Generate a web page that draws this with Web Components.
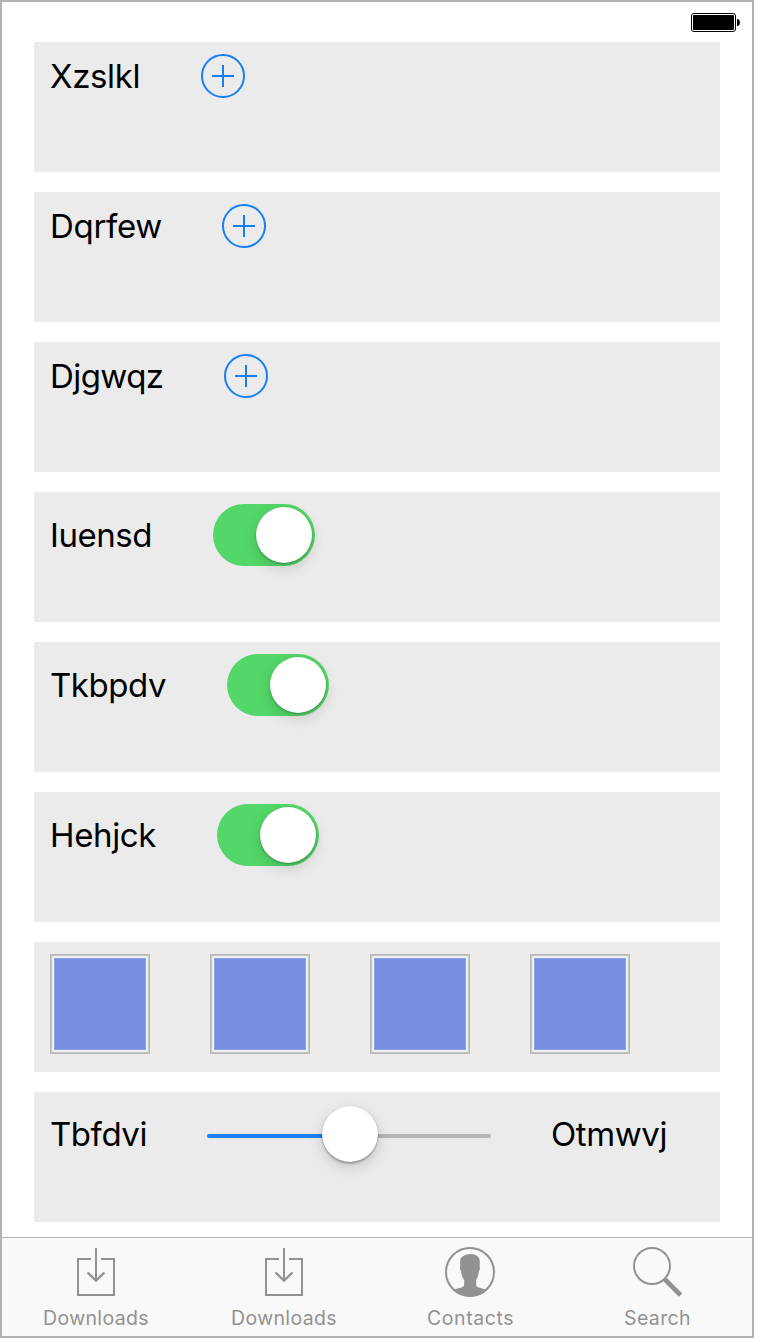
<!DOCTYPE html>
<html lang="en">
<head>
<meta charset="utf-8">
<title>Controls</title>
<style>
html, body { margin: 0; background: #fff; }
body { font-family: Inter, "Liberation Sans", sans-serif; color: #000; }
</style>
</head>
<body>
<phone-screen>
  <battery-level slot="status"></battery-level>
  <control-card><fit-text width="91" text="90">Xzslkl</fit-text><add-button></add-button></control-card>
  <control-card><fit-text width="112" text="112">Dqrfew</fit-text><add-button></add-button></control-card>
  <control-card><fit-text width="114" text="113.500">Djgwqz</fit-text><add-button></add-button></control-card>
  <control-card><fit-text width="103" text="102">Iuensd</fit-text><toggle-switch></toggle-switch></control-card>
  <control-card><fit-text width="117" text="116">Tkbpdv</fit-text><toggle-switch></toggle-switch></control-card>
  <control-card><fit-text width="107" text="106">Hehjck</fit-text><toggle-switch></toggle-switch></control-card>
  <control-card><color-tile></color-tile><color-tile></color-tile><color-tile></color-tile><color-tile></color-tile></control-card>
  <control-card><fit-text width="97" text="97">Tbfdvi</fit-text><value-slider></value-slider><fit-text width="116" text="116">Otmwvj</fit-text></control-card>
  <tab-bar slot="tabs">
    <tab-item icon="download"><fit-text width="106" text="106">Downloads</fit-text></tab-item>
    <tab-item icon="download"><fit-text width="106" text="106">Downloads</fit-text></tab-item>
    <tab-item icon="contact"><fit-text width="86" text="87">Contacts</fit-text></tab-item>
    <tab-item icon="search"><fit-text width="66" text="67">Search</fit-text></tab-item>
  </tab-bar>
</phone-screen>
<script>
function define(name, html, setup) {
  const template = document.createElement('template');
  template.innerHTML = html;
  customElements.define(name, class extends HTMLElement {
    constructor() {
      super();
      this.attachShadow({ mode: 'open' }).append(template.content.cloneNode(true));
    }
    connectedCallback() { if (setup) setup(this); }
  });
}

define('phone-screen', `<style>
:host { display: flex; flex-direction: column; box-sizing: border-box; width: 754px; height: 1338px; border: 2px solid #b2b2b2; background: #fff; }
header { display: flex; justify-content: flex-end; height: 29px; padding: 11px 12px 0 0; }
main { flex: 1; display: flex; flex-direction: column; gap: 20px; padding: 0 32px; }
</style><header><slot name="status"></slot></header><main><slot></slot></main><slot name="tabs"></slot>`);

define('battery-level', `<style>
:host { display: block; width: 49px; height: 19px; }
svg { display: block; }
</style><svg width="49" height="19" viewBox="0 0 49 19">
<rect x=".5" y=".5" width="44" height="18" rx="2.5" fill="#fff" stroke="#000"/>
<rect x="2" y="2" width="41" height="15" rx="1"/>
<path d="M46 6h1q2 1 2 3.500t-2 3.500h-1z"/></svg>`);

define('control-card', `<style>
:host { display: flex; align-items: flex-start; box-sizing: border-box; height: 130px; flex: none; padding: 12px 16px; background: #ebebeb; font-size: 33px; }
div { display: flex; align-items: center; gap: 60px; }
</style><div><slot></slot></div>`);

define('add-button', `<style>
:host { display: block; width: 44px; height: 44px; }
svg { display: block; }
</style><svg width="44" height="44" fill="none" stroke="#147efb" stroke-width="2"><circle cx="22" cy="22" r="21"/><path d="M11 22h22M22 11v22"/></svg>`);

define('toggle-switch', `<style>
:host { display: flex; justify-content: flex-end; box-sizing: border-box; width: 102px; height: 62px; padding: 3px; border-radius: 31px; background: #53d769; }
i { width: 56px; height: 56px; border-radius: 50%; background: #fff; box-shadow: 0 1px 2px rgba(0,0,0,.28), 0 5px 14px rgba(0,0,0,.16); }
</style><i></i>`);

define('color-tile', `<style>
:host { display: block; box-sizing: border-box; width: 100px; height: 100px; border: 1px solid #b7b7b7; background: #eceefa; padding: 3px; box-shadow: inset 0 0 0 1px #c4c4c4, inset 0 0 0 2px #ededed; }
i { display: block; box-sizing: border-box; height: 92px; background: #768ee2; border: 1px solid #8ca0e6; }
</style><i></i>`);

define('value-slider', `<style>
:host { display: grid; align-items: center; justify-items: center; width: 284px; height: 60px; }
b, i { grid-area: 1 / 1; }
b { width: 284px; height: 4px; margin-top: 4px; border-radius: 2px; background: linear-gradient(90deg, #147efb 50%, #b5b5b5 50%); }
i { width: 56px; height: 56px; margin-left: 2px; border-radius: 50%; background: #fff; box-shadow: 0 0 1px rgba(0,0,0,.25), 0 2px 2px rgba(0,0,0,.25), 0 5px 14px rgba(0,0,0,.17); }
</style><b></b><i></i>`);

define('tab-bar', `<style>
:host { display: grid; grid-template-columns: 188px 188px 184px 190px; box-sizing: border-box; height: 99px; border-top: 1px solid #b2b2b2; background: #f9f9f9; color: #929292; font-size: 19.5px; }
</style><slot></slot>`);

const icons = {
  download: '<g fill="none" stroke="#929292" stroke-width="2"><path d="M20 12H7V48H43V12H30M25 1V33"/><path d="M16.500 25.500L25 33.500L33.500 25.500" stroke-width="2.400"/></g>',
  contact: '<circle cx="25" cy="25" r="24" fill="none" stroke="#929292" stroke-width="2"/><path fill="#929292" d="M15.200 19.500V13.500C15.200 10 20 7 26 7C31 7 34.800 10 34.800 14L34.700 19.500C35.300 20.500 34.900 23 34 24C33.500 28 32.500 31 31.200 33V37.500C31.200 41 35.500 40.500 42 43C37.500 47.300 31.500 49.500 25 49.500C18.500 49.500 12.500 47.300 8 43C14.500 40.500 19 41 19.200 37.500V33C17.500 31 16.500 28 16 24C15.100 23 14.700 20.500 15.200 19.500Z"/>',
  search: '<circle cx="20" cy="19" r="18" fill="none" stroke="#929292" stroke-width="2"/><path d="M32.500 32L48.500 48" stroke="#929292" stroke-width="4.600"/>'
};
define('tab-item', `<style>
:host { display: flex; flex-direction: column; align-items: center; padding-top: 9px; }
svg { display: block; width: 50px; height: 50px; margin-bottom: 9px; }
</style><svg viewBox="0 0 50 50"></svg><slot></slot>`, el => {
  el.shadowRoot.querySelector('svg').innerHTML = icons[el.getAttribute('icon')];
});

/* A box of "width" whose text is tracked out or in to the "text" length. */
define('fit-text', `<style>
:host { display: block; box-sizing: border-box; white-space: nowrap; line-height: 1.2; }
span { display: inline-block; padding-top: 1px; margin-bottom: -1px; }
</style><span><slot></slot></span>`, el => {
  const span = el.shadowRoot.querySelector('span');
  el.style.width = el.getAttribute('width') + 'px';
  span.style.letterSpacing = (el.getAttribute('text') - span.getBoundingClientRect().width) / el.textContent.length + 'px';
});
</script>
</body>
</html>
